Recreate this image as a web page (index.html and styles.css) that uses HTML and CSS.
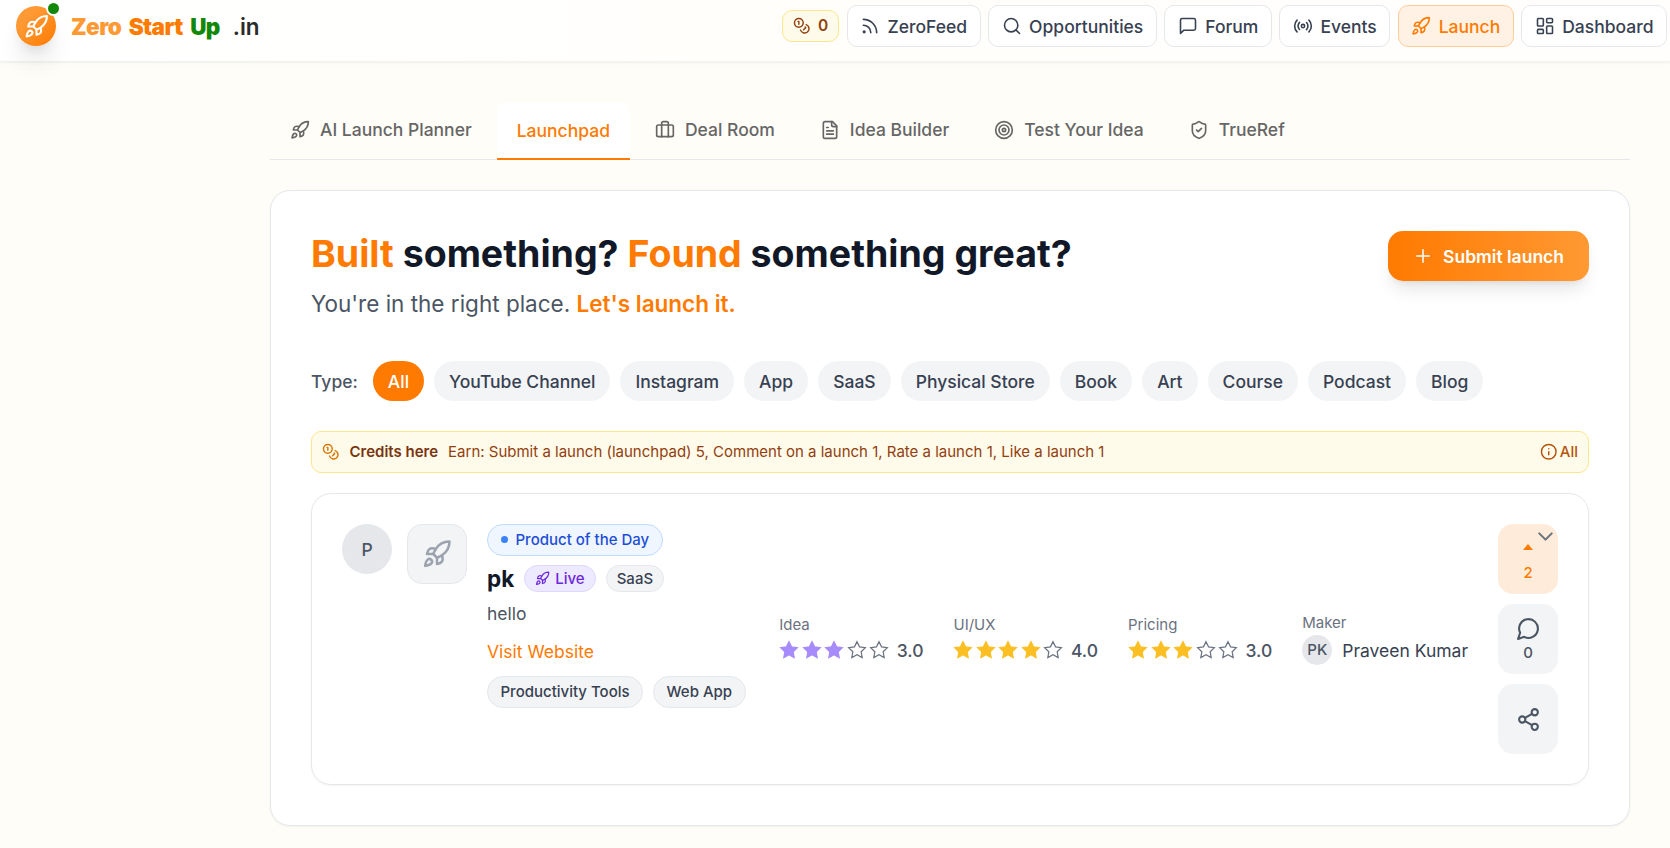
FILE: index.html
```html
<!DOCTYPE html>
<html lang="en">
<head>
<meta charset="utf-8">
<title>Zero Start Up .in</title>
<link rel="stylesheet" href="styles.css">
</head>
<body>
<svg class="sprite" aria-hidden="true">
  <symbol id="rocket" viewBox="0 0 24 24"><path d="M4.5 16.5c-1.5 1.26-2 5-2 5s3.74-.5 5-2c.71-.84.7-2.13-.09-2.91a2.18 2.18 0 0 0-2.91-.09z"/><path d="m12 15-3-3a22 22 0 0 1 2-3.95A12.88 12.88 0 0 1 22 2c0 2.72-.78 7.5-6 11a22.35 22.35 0 0 1-4 2z"/><path d="M9 12H4s.55-3.03 2-4c1.62-1.08 5 0 5 0"/><path d="M12 15v5s3.03-.55 4-2c1.08-1.62 0-5 0-5"/></symbol>
  <symbol id="coins" viewBox="0 0 24 24"><circle cx="8" cy="8" r="6"/><path d="M18.09 10.37A6 6 0 1 1 10.34 18"/><path d="M7 6h1v4"/><path d="m16.71 13.88.7.71-2.82 2.82"/></symbol>
  <symbol id="rss" viewBox="0 0 24 24"><path d="M4 11a9 9 0 0 1 9 9"/><path d="M4 4a16 16 0 0 1 16 16"/><circle cx="5" cy="19" r="1"/></symbol>
  <symbol id="search" viewBox="0 0 24 24"><circle cx="11" cy="11" r="8"/><path d="m21 21-4.3-4.3"/></symbol>
  <symbol id="square-msg" viewBox="0 0 24 24"><path d="M21 15a2 2 0 0 1-2 2H7l-4 4V5a2 2 0 0 1 2-2h14a2 2 0 0 1 2 2z"/></symbol>
  <symbol id="radio" viewBox="0 0 24 24"><path d="M4.9 19.1C1 15.2 1 8.8 4.9 4.9"/><path d="M7.8 16.2c-2.3-2.3-2.3-6.1 0-8.5"/><circle cx="12" cy="12" r="2"/><path d="M16.2 7.8c2.3 2.3 2.3 6.1 0 8.5"/><path d="M19.1 4.9C23 8.8 23 15.1 19.1 19"/></symbol>
  <symbol id="dashboard" viewBox="0 0 24 24"><rect width="7" height="9" x="3" y="3" rx="1"/><rect width="7" height="5" x="14" y="3" rx="1"/><rect width="7" height="9" x="14" y="12" rx="1"/><rect width="7" height="5" x="3" y="16" rx="1"/></symbol>
  <symbol id="luggage" viewBox="0 0 24 24"><path d="M8 20V4a2 2 0 0 1 2-2h4a2 2 0 0 1 2 2v16"/><rect width="20" height="14" x="2" y="6" rx="2"/></symbol>
  <symbol id="file" viewBox="0 0 24 24"><path d="M15 2H6a2 2 0 0 0-2 2v16a2 2 0 0 0 2 2h12a2 2 0 0 0 2-2V7Z"/><path d="M14 2v4a2 2 0 0 0 2 2h4"/><path d="M10 9H8"/><path d="M16 13H8"/><path d="M16 17H8"/></symbol>
  <symbol id="target" viewBox="0 0 24 24"><circle cx="12" cy="12" r="10"/><circle cx="12" cy="12" r="6"/><circle cx="12" cy="12" r="2"/></symbol>
  <symbol id="shield" viewBox="0 0 24 24"><path d="M20 13c0 5-3.5 7.5-7.66 8.95a1 1 0 0 1-.67-.01C7.5 20.5 4 18 4 13V6a1 1 0 0 1 1-1c2 0 4.5-1.2 6.24-2.72a1.17 1.17 0 0 1 1.52 0C14.51 3.81 17 5 19 5a1 1 0 0 1 1 1z"/><path d="m9 12 2 2 4-4"/></symbol>
  <symbol id="plus" viewBox="0 0 24 24"><path d="M4.5 12h15M12 4.5v15"/></symbol>
  <symbol id="info" viewBox="0 0 24 24"><circle cx="12" cy="12" r="10"/><path d="M12 16v-4M12 8h.01"/></symbol>
  <symbol id="star" viewBox="0 0 24 24"><path d="M12 2l3.09 6.26L22 9.27l-5 4.87 1.18 6.88L12 17.77l-6.18 3.25L7 14.14 2 9.27l6.91-1.01z"/></symbol>
  <symbol id="chevron" viewBox="0 0 24 24"><path d="m6 9 6 6 6-6"/></symbol>
  <symbol id="comment" viewBox="0 0 24 24"><path d="M7.9 20A9 9 0 1 0 4 16.1L2 22Z"/></symbol>
  <symbol id="share" viewBox="0 0 24 24"><circle cx="18" cy="5" r="3"/><circle cx="6" cy="12" r="3"/><circle cx="18" cy="19" r="3"/><path d="m8.59 13.51 6.83 3.98M15.41 6.51l-6.82 3.98"/></symbol>
</svg>

<header class="topbar">
  <a class="brand">
    <span class="logo"><svg class="icon i24"><use href="#rocket"/></svg><span class="logo-dot"></span></span>
    <span class="brand-name"><span class="b-zero">Zero</span><span class="b-start">Start</span><span class="b-up">Up</span><span class="b-in">.in</span></span>
  </a>
  <nav class="nav">
    <a class="credits-pill"><svg class="icon"><use href="#coins"/></svg>0</a>
    <a class="nav-btn"><svg class="icon"><use href="#rss"/></svg>ZeroFeed</a>
    <a class="nav-btn"><svg class="icon"><use href="#search"/></svg>Opportunities</a>
    <a class="nav-btn"><svg class="icon"><use href="#square-msg"/></svg>Forum</a>
    <a class="nav-btn"><svg class="icon"><use href="#radio"/></svg>Events</a>
    <a class="nav-btn active"><svg class="icon"><use href="#rocket"/></svg>Launch</a>
    <a class="nav-btn"><svg class="icon"><use href="#dashboard"/></svg>Dashboard</a>
  </nav>
</header>

<main class="page">
  <div class="tabs">
    <a class="tab"><svg class="icon"><use href="#rocket"/></svg>AI Launch Planner</a>
    <a class="tab current">Launchpad</a>
    <a class="tab"><svg class="icon"><use href="#luggage"/></svg>Deal Room</a>
    <a class="tab"><svg class="icon"><use href="#file"/></svg>Idea Builder</a>
    <a class="tab"><svg class="icon"><use href="#target"/></svg>Test Your Idea</a>
    <a class="tab"><svg class="icon"><use href="#shield"/></svg>TrueRef</a>
  </div>

  <section class="panel">
    <div class="hero">
      <div>
        <h1><em>Built</em> something? <em>Found</em> something great?</h1>
        <p>You're in the right place. <strong>Let's launch it.</strong></p>
      </div>
      <button class="submit"><svg class="icon"><use href="#plus"/></svg>Submit launch</button>
    </div>

    <div class="filters">
      <span class="filters-label">Type:</span>
      <a class="chip on">All</a><a class="chip">YouTube Channel</a><a class="chip">Instagram</a><a class="chip">App</a><a class="chip">SaaS</a><a class="chip">Physical Store</a><a class="chip">Book</a><a class="chip">Art</a><a class="chip">Course</a><a class="chip">Podcast</a><a class="chip">Blog</a>
    </div>

    <div class="credits">
      <svg class="icon"><use href="#coins"/></svg>
      <b>Credits here</b>
      <span>Earn: Submit a launch (launchpad) 5, Comment on a launch 1, Rate a launch 1, Like a launch 1</span>
      <a class="credits-all"><svg class="icon"><use href="#info"/></svg><span>All</span></a>
    </div>

    <article class="item">
      <span class="avatar">P</span>
      <span class="thumb"><svg class="icon"><use href="#rocket"/></svg></span>
      <div class="details">
        <span class="award"><i></i>Product of the Day</span>
        <div class="title-row"><h2>pk</h2><span class="live"><svg class="icon"><use href="#rocket"/></svg>Live</span><span class="kind">SaaS</span></div>
        <p class="desc">hello</p>
        <a class="visit">Visit Website</a>
        <div class="tags"><span>Productivity Tools</span><span>Web App</span></div>
      </div>
      <div class="metrics">
        <div class="metric idea"><span class="label">Idea</span>
          <div class="stars"><svg class="full"><use href="#star"/></svg><svg class="full"><use href="#star"/></svg><svg class="full"><use href="#star"/></svg><svg><use href="#star"/></svg><svg><use href="#star"/></svg><b>3.0</b></div></div>
        <div class="metric"><span class="label">UI/UX</span>
          <div class="stars"><svg class="full"><use href="#star"/></svg><svg class="full"><use href="#star"/></svg><svg class="full"><use href="#star"/></svg><svg class="full"><use href="#star"/></svg><svg><use href="#star"/></svg><b>4.0</b></div></div>
        <div class="metric"><span class="label">Pricing</span>
          <div class="stars"><svg class="full"><use href="#star"/></svg><svg class="full"><use href="#star"/></svg><svg class="full"><use href="#star"/></svg><svg><use href="#star"/></svg><svg><use href="#star"/></svg><b>3.0</b></div></div>
        <div class="metric"><span class="label">Maker</span>
          <div class="maker"><span>PK</span>Praveen Kumar</div></div>
      </div>
      <div class="actions">
        <button class="action vote"><i></i><span>2</span></button>
        <button class="action talk"><svg class="icon"><use href="#comment"/></svg><span>0</span></button>
        <button class="action"><svg class="icon"><use href="#share"/></svg></button>
      </div>
      <svg class="icon expand"><use href="#chevron"/></svg>
    </article>
  </section>
</main>
</body>
</html>
```
FILE: styles.css
```css
* { box-sizing: border-box; margin: 0; padding: 0; }
body {
  font: 500 17.5px/25px Inter, "Liberation Sans", sans-serif;
  background: #fffdf7;
  color: #374151;
  height: 848px;
  overflow: hidden;
}
.sprite { display: none; }
.icon {
  width: 20px; height: 20px; flex: none; display: block;
  fill: none; stroke: currentColor; stroke-width: 2;
  stroke-linecap: round; stroke-linejoin: round;
}
button { font: inherit; border: 0; color: inherit; }

/* Top bar */
.topbar {
  display: flex; justify-content: space-between; align-items: flex-start;
  height: 62px; padding: 5px 3px 0 16px;
  background: linear-gradient(90deg, #fff, #fffefb 50%, #fffefd);
  border-bottom: 1px solid #f1f1ef;
  box-shadow: 0 1px 3px rgba(0, 0, 0, .05);
}
.brand { display: flex; align-items: center; gap: 15px; padding-top: 1px; }
.logo {
  position: relative; width: 40px; height: 40px; border-radius: 50%;
  display: flex; align-items: center; justify-content: center; color: #fff;
  background: linear-gradient(135deg, #ff9933 30%, #ff7a00);
  box-shadow: 0 20px 25px -3px rgba(0, 0, 0, .09), 0 8px 12px -5px rgba(0, 0, 0, .1);
}
.i24 { width: 25px; height: 25px; }
.logo-dot {
  position: absolute; right: -5px; top: -5px; width: 15px; height: 15px;
  border-radius: 50%; background: #138808; border: 2px solid #fff;
}
.brand-name { display: flex; font-size: 22.5px; line-height: 38px; font-weight: 900; letter-spacing: -.56px; padding-top: 2px; }
.b-zero { color: #ff9933; margin-right: 7.5px; }
.b-start { color: #ff7a00; margin-right: 7.5px; }
.b-up { color: #138808; margin-right: 13px; }
.b-in { color: #2b2b2b; font-weight: 600; letter-spacing: 0; }
.nav { display: flex; align-items: center; gap: 7.5px; }
.nav-btn {
  display: flex; align-items: center; gap: 7.5px; height: 42px; padding: 0 12.5px;
  border: 1px solid #e5e7eb; border-radius: 10px; background: #fff;
}
.nav-btn .icon { stroke-width: 1.9; }
.nav-btn.active { color: #ff7a00; background: #fff2e5; border-color: #ffcc99; }
.credits-pill {
  display: flex; align-items: center; gap: 7.5px; width: 57px; height: 32px; padding: 0 10px;
  border: 1px solid #fde68a; border-radius: 10px; background: #fffbeb;
  color: #92400e; font-size: 15.5px; line-height: 28px; font-weight: 600;
}
.credits-pill .icon { width: 17.5px; height: 17.5px; }

/* Tabs */
.page { padding: 40px 40px 0 270px; }
.tabs { display: flex; gap: 5px; height: 58px; border-bottom: 1px solid #e5e7eb; }
.tab { display: flex; align-items: center; gap: 10px; height: 55px; padding: 0 20px; color: #666; }
.tab.current {
  height: 58px; color: #ff7a00; background: #fff;
  border-radius: 10px 10px 0 0; border-bottom: 2px solid #ff7a00;
}

/* Panel */
.panel {
  margin-top: 30px; padding: 40px; height: 636px;
  background: #fff; border: 1px solid #e5e7eb; border-radius: 20px;
  box-shadow: 0 1px 3px rgba(0, 0, 0, .05);
}
.hero { display: flex; justify-content: space-between; align-items: flex-start; height: 90px; }
h1 { font-size: 37.5px; line-height: 45px; font-weight: 700; color: #111827; }
h1 em { font-style: normal; color: #ff7a00; }
.hero p { margin-top: 10px; font-size: 22.5px; line-height: 35px; font-weight: 400; color: #4b5563; }
.hero strong { font-weight: 600; color: #ff7a00; }
.submit {
  display: flex; align-items: center; gap: 10px; height: 50px; padding: 0 25px;
  border-radius: 15px; color: #fff; font-weight: 600;
  background: linear-gradient(90deg, #ff7a00, #ff9933);
  box-shadow: 0 12px 18px -4px rgba(0, 0, 0, .1), 0 5px 7px -5px rgba(0, 0, 0, .1);
}
.submit .icon { stroke-width: 1.8; }
.filters { display: flex; align-items: center; gap: 10px; margin-top: 40px; height: 40px; }
.filters-label { color: #4b5563; margin-right: 5px; }
.chip { height: 40px; padding: 0 15px; line-height: 41px; border-radius: 20px; background: #f3f4f6; }
.chip.on { background: #ff7a00; color: #fff; }
.credits {
  display: flex; align-items: center; gap: 10px; height: 42px; margin-top: 30px; padding: 0 10px;
  background: #fffbeb; border: 1px solid #fde68a; border-radius: 10px;
  font-size: 15px; font-weight: 400; color: #92400e;
}
.credits b, .credits span { padding-bottom: 2px; }
.credits b { font-weight: 600; color: #78350f; }
.credits .icon { width: 17.5px; height: 17.5px; color: #d97706; }
.credits-all { display: flex; align-items: center; gap: 2.5px; margin-left: auto; font-weight: 500; color: #b45309; }
.credits .credits-all .icon { color: #b45309; }

/* Launch item */
.item {
  position: relative; display: flex; height: 292px; margin-top: 20px; padding: 30px;
  border: 1px solid #e5e7eb; border-radius: 20px; box-shadow: 0 1px 2px rgba(0, 0, 0, .05);
}
.avatar {
  width: 50px; height: 50px; line-height: 51px; border-radius: 50%;
  text-align: center; background: #e5e7eb; color: #4b5563;
}
.thumb {
  width: 60px; height: 60px; margin: 0 20px 0 15px; display: flex; align-items: center; justify-content: center;
  background: #f3f4f6; border: 1px solid #e5e7eb; border-radius: 15px; color: #9ca3af;
}
.thumb .icon { width: 30px; height: 30px; }
.details { flex: 1; display: flex; flex-direction: column; align-items: flex-start; }
.award {
  display: flex; align-items: center; gap: 7.5px; height: 32px; padding: 0 12.5px 1px;
  background: #eff6ff; border: 1px solid #bfdbfe; border-radius: 16px; color: #1d4ed8; font-size: 15px;
}
.award i { width: 7.5px; height: 7.5px; border-radius: 50%; background: #3b82f6; }
.title-row { display: flex; align-items: center; gap: 10px; height: 27px; margin-top: 9px; }
h2 { font-size: 22.5px; line-height: 27px; font-weight: 700; color: #111827; }
.live, .kind { display: flex; align-items: center; gap: 5px; height: 27px; padding: 0 10px; border-radius: 14px; font-size: 15px; border: 1px solid #e5e7eb; background: #f3f4f6; }
.live { color: #6d28d9; background: #ede9fe; border-color: #ddd6fe; }
.live .icon { width: 15px; height: 15px; }
.desc { margin-top: 9px; font-weight: 400; color: #4b5563; }
.visit { margin-top: 13px; font-weight: 400; color: #ff7a00; }
.tags { display: flex; gap: 10px; margin-top: 12px; }
.tags span { height: 32px; line-height: 30px; padding: 0 12.5px; border: 1px solid #e5e7eb; border-radius: 16px; background: #f3f4f6; font-size: 15px; }
.metrics { display: flex; align-items: center; gap: 30px; height: 230px; }
.label { display: block; font-size: 15px; line-height: 20px; font-weight: 400; color: #6b7280; }
.stars { display: flex; align-items: center; gap: 2.5px; margin-top: 2.5px; height: 25px; }
.stars svg { width: 20px; height: 20px; fill: none; stroke: #6b7280; stroke-width: 1.5; }
.stars .full { fill: #fbbf24; stroke: #fbbf24; }
.idea .full { fill: #a78bfa; stroke: #a78bfa; }
.stars b { margin-left: 5px; font-weight: 500; color: #4b5563; }
.maker { display: flex; align-items: center; gap: 10px; height: 30px; margin-top: 2.5px; font-weight: 400; }
.maker span { width: 30px; height: 30px; line-height: 30px; border-radius: 50%; text-align: center; background: #e5e7eb; color: #4b5563; font-size: 15px; font-weight: 500; }
.actions { display: flex; flex-direction: column; gap: 10px; margin-left: 30px; }
.action {
  width: 60px; height: 70px; display: flex; flex-direction: column; align-items: center; justify-content: center;
  border-radius: 15px; background: #f3f4f6; color: #4b5563; font-size: 15px; line-height: 20px;
}
.action .icon { width: 25px; height: 25px; }
.vote { background: #ffebd9; color: #ff7a00; gap: 13px; padding-top: 9px; }
.vote i { border: 5.5px solid transparent; border-top: 0; border-bottom: 6px solid #ff7a00; }
.talk { gap: 2px; }
.expand { position: absolute; right: 30px; top: 30px; width: 25px; height: 25px; color: #6b7280; }
```
